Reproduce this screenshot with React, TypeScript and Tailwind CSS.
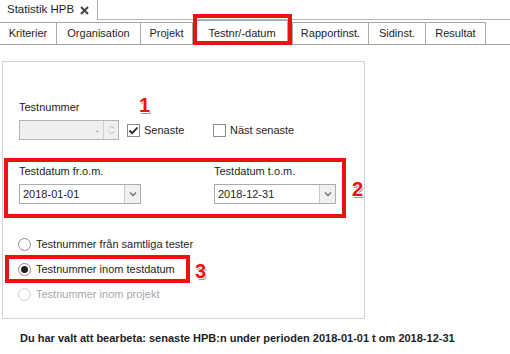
import type { ReactNode } from 'react';

const tabs = [
  { label: 'Kriterier', w: 'w-[57px]' },
  { label: 'Organisation', w: 'w-[84px]' },
  { label: 'Projekt', w: 'w-[52px]' },
];
const tabsAfter = [
  { label: 'Rapportinst.', w: 'w-[76px]' },
  { label: 'Sidinst.', w: 'w-[57px]' },
  { label: 'Resultat', w: 'w-[61px]' },
];

function Badge({ n, className }: { n: string; className: string }) {
  return (
    <span
      className={`absolute text-[20px] font-bold leading-none text-[#ee1111] ${className}`}
      style={{ textShadow: '-1px 0 #fff, 1px 0 #fff, 0 -1px #fff, 0 1px #fff, 1px 2px #9a9a9a' }}
    >
      {n}
    </span>
  );
}

function Checkbox({ checked, label }: { checked?: boolean; label: string }) {
  return (
    <label className="flex items-center gap-[4px]">
      <span className="flex h-[13px] w-[13px] items-center justify-center border border-[#8c8c8c] bg-white">
        {checked ? (
          <svg width="11" height="11" viewBox="0 0 11 11">
            <path d="M1.5 5.5 L4.2 8.2 L9.5 2.5" fill="none" stroke="#222" strokeWidth="1.8" />
          </svg>
        ) : null}
      </span>
      <span>{label}</span>
    </label>
  );
}

function Radio({ checked, disabled, label }: { checked?: boolean; disabled?: boolean; label: string }) {
  return (
    <label className={`flex items-center gap-[5px] ${disabled ? 'text-[#a8a8a8]' : ''}`}>
      <span
        className={`flex h-[13px] w-[13px] items-center justify-center rounded-full border bg-white ${
          disabled ? 'border-[#d0d0d0]' : 'border-[#8a8a8a]'
        }`}
      >
        {checked ? <span className="h-[7px] w-[7px] rounded-full bg-[#222]" /> : null}
      </span>
      <span>{label}</span>
    </label>
  );
}

function DateSelect({ label, value }: { label: string; value: string }): ReactNode {
  return (
    <div className="flex flex-col gap-[6px]">
      <span className="leading-[13px]">{label}</span>
      <div className="flex h-[20px] w-[122px] border border-[#adadad] bg-white">
        <span className="flex-1 pl-[3px] leading-[18px]">{value}</span>
        <span className="flex w-[16px] items-center justify-center border-l border-[#c8c8c8] bg-[#f0f0f0]">
          <svg width="8" height="6" viewBox="0 0 8 6">
            <path d="M1 1.5 L4 4.5 L7 1.5" fill="none" stroke="#707070" strokeWidth="1.4" />
          </svg>
        </span>
      </div>
    </div>
  );
}

export default function App() {
  return (
    <div
      className="relative h-[354px] w-[510px] overflow-hidden bg-white text-[11px] text-[#1e1e1e]"
      style={{ fontFamily: '"Liberation Sans", Arial, sans-serif' }}
    >
      {/* document tab */}
      <div className="flex h-[20px]">
        <div className="flex w-[98px] items-center whitespace-nowrap border-r border-[#a8a8a8] pl-[7px] text-[11.5px]">
          <span className="w-[73px]">Statistik HPB</span>
          <svg width="9" height="9" viewBox="0 0 9 9">
            <path d="M1 1 L8 8 M8 1 L1 8" stroke="#444" strokeWidth="2" />
          </svg>
        </div>
        <div className="flex-1 border-b border-[#b4b4b4]" />
      </div>

      {/* tab strip */}
      <div className="flex h-[25px] items-end border-b border-[#a8a8a8]">
        {tabs.map((t) => (
          <div
            key={t.label}
            className={`${t.w} flex h-[22px] items-center justify-center border-r border-t border-[#a8a8a8] pb-[1px]`}
          >
            {t.label}
          </div>
        ))}
        <div className="ml-[3px] mr-[4px] -mb-px flex h-[25px] w-[92px] items-center justify-center border-x border-t border-[#a8a8a8] bg-white">
          Testnr/-datum
        </div>
        {tabsAfter.map((t) => (
          <div
            key={t.label}
            className={`${t.w} flex h-[22px] items-center justify-center border-l border-t border-[#a8a8a8] pb-[1px] last:border-r`}
          >
            {t.label}
          </div>
        ))}
      </div>

      {/* settings panel */}
      <div className="ml-[2px] mt-[16px] flex h-[258px] w-[363px] flex-col border border-[#d2d2d2]">
        <div className="mt-[39px] pl-[16px] leading-[13px]">Testnummer</div>
        <div className="mt-[6px] flex items-center pl-[16px]">
          <div className="flex h-[20px] w-[100px] border border-[#b4b4b4] bg-[#efefef]">
            <span className="flex-1 pr-[4px] text-right leading-[18px] text-[#9a9a9a]">-</span>
            <span className="flex w-[15px] flex-col items-center justify-center gap-[2px] border-l border-[#d0d0d0]">
              <svg width="7" height="4" viewBox="0 0 7 4">
                <path d="M1 3.5 L3.5 1 L6 3.5" fill="none" stroke="#b0b0b0" strokeWidth="1" />
              </svg>
              <svg width="7" height="4" viewBox="0 0 7 4">
                <path d="M1 0.5 L3.5 3 L6 0.5" fill="none" stroke="#b0b0b0" strokeWidth="1" />
              </svg>
            </span>
          </div>
          <div className="ml-[8px] w-[86px]">
            <Checkbox checked label="Senaste" />
          </div>
          <Checkbox label="Näst senaste" />
        </div>

        <div className="ml-[1px] mt-[18px] flex h-[60px] w-[342px] gap-[73px] border-4 border-[#ee1111] pl-[11px] pt-[3px]">
          <DateSelect label="Testdatum fr.o.m." value="2018-01-01" />
          <DateSelect label="Testdatum t.o.m." value="2018-12-31" />
        </div>

        <div className="mt-[18px] flex h-[16px] items-center pl-[15px]">
          <Radio label="Testnummer från samtliga tester" />
        </div>
        <div className="ml-[2px] mt-[3px] flex h-[28px] w-[185px] items-center border-4 border-[#ee1111] pl-[9px]">
          <Radio checked label="Testnummer inom testdatum" />
        </div>
        <div className="mt-[3px] flex h-[16px] items-center pl-[15px]">
          <Radio disabled label="Testnummer inom projekt" />
        </div>
      </div>

      <p className="mt-[13px] pl-[20px] text-[11px] font-bold leading-[13px]">
        Du har valt att bearbeta: senaste HPB:n under perioden 2018-01-01 t om 2018-12-31
      </p>

      {/* annotations */}
      <div className="pointer-events-none absolute left-[193px] top-[14px] h-[31px] w-[99px] border-4 border-[#ee1111]" />
      <Badge n="1" className="left-[139px] top-[95px]" />
      <Badge n="2" className="left-[352px] top-[179px]" />
      <Badge n="3" className="left-[195px] top-[261px]" />
    </div>
  );
}
